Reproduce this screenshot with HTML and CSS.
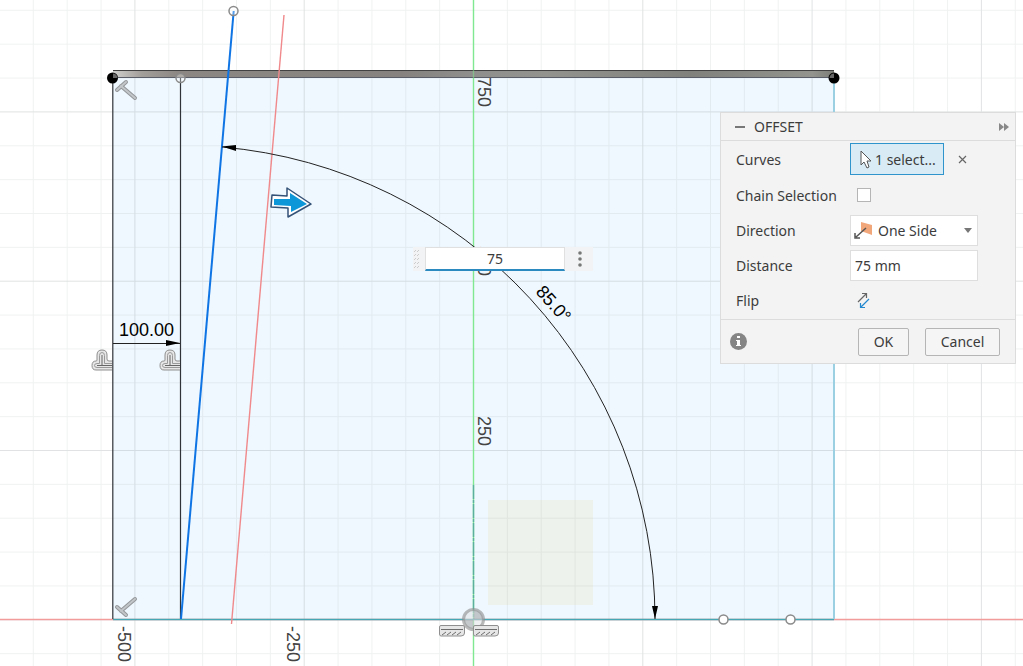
FILE: index.html
```html
<!DOCTYPE html>
<html lang="en">
<head>
    <meta charset="UTF-8">
    <meta name="viewport" content="width=device-width, initial-scale=1.0">
    <title>Offset</title>
    <link rel="stylesheet" href="styles.css">
</head>
<body>

<main class="workspace">
    <svg class="sketch" role="img" aria-label="Sketch canvas">
        <defs>
            <pattern id="minor" x="473" y="619.3" width="33.86" height="33.86" patternUnits="userSpaceOnUse">
                <path class="grid-minor" d="M0.5 0V33.86M0 0.5H33.86"/>
            </pattern>
            <pattern id="major" x="473" y="619.3" width="169.3" height="169.3" patternUnits="userSpaceOnUse">
                <path class="grid-major" d="M0.5 0V169.3M0 0.5H169.3"/>
            </pattern>
            <linearGradient id="bar" x1="0" x2="1" y1="0" y2="0">
                <stop offset="0" stop-color="#d0d0ce"/>
                <stop offset="0.04" stop-color="#a29e9a"/>
                <stop offset="0.09" stop-color="#8c8782"/>
                <stop offset="0.4" stop-color="#85827f"/>
                <stop offset="0.5" stop-color="#8f8f8d"/>
                <stop offset="0.6" stop-color="#92928f"/>
                <stop offset="0.8" stop-color="#80807d"/>
                <stop offset="0.97" stop-color="#92948d"/>
                <stop offset="1" stop-color="#7c7d78"/>
            </linearGradient>
            <g id="perpendicular">
                <path class="mark-edge" d="M0 0L14 12M-4 4L5 -4"/>
                <path class="mark-core" d="M0 0L14 12M-4 4L5 -4"/>
            </g>
            <g id="vertical">
                <path class="hv-shape" d="M10 10H-6Q-10 10 -10 5.5Q-10 1 -6 1Q-5 1 -5 0V-5Q-5 -10 0 -10Q5 -10 5 -5V-1Q5 1 7 1H10"/>
                <path class="hv-line" d="M10 7.5H-5Q-7.5 7.5 -7.5 5.5Q-7.5 3.5 -5 3.5H-2.5V-4.5Q-2.5 -7.5 0 -7.5Q2.5 -7.5 2.5 -4.5V3.5H10"/>
                <path class="hv-core" d="M0 -5V5M-5 5.5H10"/>
            </g>
            <g id="fixed">
                <path class="hv-shape" d="M2 0.5H24Q25.5 0.5 25.5 2V8Q25.5 11 22 11H2Q0.5 11 0.5 9V2Q0.5 0.5 2 0.5Z"/>
                <path class="fixed-line" d="M2 4.5H24M3 10L7 7M8 10L12 7M13 10L17 7M18 10L22 7"/>
            </g>
        </defs>

        <!-- closed profile and grid -->
        <rect class="profile" x="113" y="78" width="721" height="541"/>
        <rect class="plane" x="488" y="500" width="105" height="105"/>
        <rect width="100%" height="100%" fill="url(#minor)"/>
        <rect width="100%" height="100%" fill="url(#major)"/>

        <!-- axes -->
        <line class="axis-x" x1="0" y1="619.5" x2="100%" y2="619.5"/>
        <line class="axis-y" x1="473.5" y1="0" x2="473.5" y2="100%"/>
        <path class="construction" d="M473.5 485V619"/>
        <path class="base" d="M113 619.5H834"/>
        <path class="side" d="M834 78V619"/>

        <!-- solid body seen from the edge -->
        <rect x="113" y="70" width="721" height="8" fill="url(#bar)"/>
        <path class="body-top" d="M113 70.5H834"/>
        <path class="body-bottom" d="M113 77.5H834"/>
        <path class="axis-y faint" d="M473.5 70V78"/>

        <g class="scale">
            <text transform="translate(478 77) rotate(90)">750</text>
            <text transform="translate(478 246) rotate(90)">500</text>
            <text transform="translate(478 416) rotate(90)">250</text>
            <text transform="translate(118 626) rotate(90)">-500</text>
            <text transform="translate(287 626) rotate(90)">-250</text>
        </g>

        <!-- sketch lines -->
        <path class="line" d="M112.8 78V619M180.5 78V619"/>
        <path class="preview" d="M284 15L231.5 624"/>
        <path class="selected" d="M233.7 11L181 619"/>

        <!-- dimensions -->
        <path class="dimension" d="M113 343.5H180"/>
        <path class="arrowhead" d="M180 343L166 340V346Z"/>
        <text class="dimension-text" x="119" y="336">100.00</text>
        <path class="dimension" d="M222 147A474 474 0 0 1 655 619"/>
        <path class="arrowhead" d="M222 146.5L236 145V151ZM655 619L652 606H658Z"/>
        <text class="dimension-text" text-anchor="middle" transform="translate(549 308) rotate(48)">85.0°</text>

        <!-- points -->
        <circle class="origin" cx="473.5" cy="619.5" r="10"/>
        <path class="origin-fill" d="M473.5 619.5V610A9.5 9.5 0 0 1 483 619.5ZM473.5 619.5V629A9.5 9.5 0 0 1 464 619.5Z"/>
        <circle class="dot" cx="112.5" cy="78" r="5.5"/>
        <path class="dot-cut" d="M113 78V73.5A4.5 4.5 0 0 1 117.5 78Z"/>
        <circle class="dot" cx="834" cy="78" r="5.5"/>
        <path class="dot-cut" d="M834 78V73.5A4.5 4.5 0 0 0 829.5 78Z"/>
        <circle class="point clear" cx="180.5" cy="78" r="4.5"/>
        <circle class="point clear" cx="233.5" cy="11" r="4.5"/>
        <circle class="point" cx="723.5" cy="619.5" r="4.5"/>
        <circle class="point" cx="790.5" cy="619.5" r="4.5"/>

        <!-- constraints -->
        <use href="#perpendicular" transform="translate(121 86)"/>
        <use href="#perpendicular" transform="translate(121 611) scale(1 -1)"/>
        <use href="#vertical" transform="translate(102 360)"/>
        <use href="#vertical" transform="translate(170 360)"/>
        <use href="#fixed" transform="translate(439 625)"/>
        <use href="#fixed" transform="translate(473 625)"/>

        <!-- drag handle -->
        <path class="handle-edge" d="M272 195L287 196V188L311 204L288 217V208L271 207Z"/>
        <path class="handle" d="M274 199L290 199V193L307 204L291 212V206L274 205Z"/>
    </svg>

    <div class="value-box">
        <svg class="grip" width="12" height="24" aria-hidden="true">
            <path d="M1 5L3 3M1 9L3 7M1 13L3 11M1 17L3 15M1 21L3 19M4 5L6 3M4 9L6 7M4 13L6 11M4 17L6 15M4 21L6 19"/>
        </svg>
        <input type="text" value="75" aria-label="Offset distance">
        <button type="button" aria-label="More options">
            <svg width="6" height="18"><circle cx="4" cy="3" r="1.8"/><circle cx="4" cy="9" r="1.8"/><circle cx="4" cy="15" r="1.8"/></svg>
        </button>
    </div>

    <form class="panel">
        <header class="panel-header">
            <button type="button" class="plain collapse" aria-label="Collapse"></button>
            <h1>OFFSET</h1>
            <button type="button" class="plain expand" aria-label="Expand">
                <svg width="10" height="8"><path d="M0 0L5 4L0 8ZM5 0L10 4L5 8Z"/></svg>
            </button>
        </header>

        <div class="panel-body">
            <div class="row">
                <label for="curves">Curves</label>
                <button type="button" id="curves" class="selection">
                    <svg width="14" height="20" viewBox="0 0 14 20" aria-hidden="true">
                        <path d="M2 2V16L5 13L8 19L10 18L8 12H12Z"/>
                    </svg>
                    <span>1 select...</span>
                </button>
                <button type="button" class="plain clear-selection" aria-label="Clear selection">
                    <svg width="9" height="9"><path d="M1 1L8 8M8 1L1 8"/></svg>
                </button>
            </div>
            <div class="row">
                <label for="chain">Chain Selection</label>
                <input type="checkbox" id="chain">
            </div>
            <div class="row">
                <label for="direction">Direction</label>
                <div class="select-box">
                    <select id="direction">
                        <option>One Side</option>
                    </select>
                    <svg class="side-icon" width="20" height="18" aria-hidden="true">
                        <path class="face" d="M7 0L18 3V13L7 9Z"/>
                        <path class="arrow" d="M12 6L2 15M1 11V16H6"/>
                    </svg>
                    <svg class="caret" width="8" height="5" aria-hidden="true"><path d="M0 0H8L4 5Z"/></svg>
                </div>
            </div>
            <div class="row">
                <label for="distance">Distance</label>
                <input type="text" id="distance" value="75 mm">
            </div>
            <div class="row">
                <label for="flip">Flip</label>
                <button type="button" id="flip" class="plain flip" aria-label="Flip">
                    <svg width="14" height="17">
                        <path class="up" d="M1 10L9 2M5 1.5H9.5V6"/>
                        <path class="down" d="M12 7L4 15M3.5 11V15.5H8"/>
                    </svg>
                </button>
            </div>
        </div>

        <footer class="panel-footer">
            <button type="button" class="plain info" aria-label="Info">
                <svg width="17" height="17"><circle cx="8.5" cy="8.5" r="8.5"/><path d="M7 3H10V5H7ZM6 7H10V12H11V13H6V12H7V8H6Z"/></svg>
            </button>
            <button type="submit" class="ok">OK</button>
            <button type="button" class="cancel">Cancel</button>
        </footer>
    </form>
</main>

</body>
</html>
```
FILE: styles.css
```css
* {
    box-sizing: border-box;
}

body {
    margin: 0;
    background: #fff;
    color: #3c3c3c;
    font-family: "Noto Sans", sans-serif;
    font-size: 14px;
}

input, select, button {
    margin: 0;
    font: inherit;
    color: inherit;
}

button {
    cursor: pointer;
}

svg {
    display: block;
    fill: none;
}

.workspace {
    position: relative;
    height: 100vh;
    overflow: hidden;
}

/* sketch */
.sketch {
    width: 100%;
    height: 100%;
}

.profile { fill: #eff8fe; }
.plane { fill: #eef2ec; }
.grid-minor { stroke: rgba(90, 100, 105, 0.09); }
.grid-major { stroke: rgba(90, 100, 105, 0.1); }
.axis-x { stroke: #f39c9c; stroke-width: 1.4; }
.axis-y { stroke: #7fe890; stroke-width: 1.4; }
.faint { opacity: 0.5; }
.construction { stroke: #5cae9f; stroke-width: 1.4; stroke-dasharray: 14 1 3 1; }
.base { stroke: #45a6b4; stroke-width: 1.4; }
.side { stroke: #9bd0e2; stroke-width: 2; }
.body-top { stroke: #424242; }
.body-bottom { stroke: #595e68; }
.line { stroke: #303438; stroke-width: 1.2; }
.preview { stroke: #f0898b; stroke-width: 1.4; }
.selected { stroke: #0f74e4; stroke-width: 2; }
.dimension { stroke: #222; }
.arrowhead { fill: #000; }

.scale, .dimension-text {
    font-family: "Liberation Sans", sans-serif;
    font-size: 18px;
}

.scale { fill: #444; }
.dimension-text { fill: #000; }

.dot { fill: #000; }
.dot-cut { fill: #666; }
.point { fill: #fff; stroke: #8a8a8a; stroke-width: 1.5; }
.clear { fill: rgba(255, 255, 255, 0.3); }
.origin { fill: rgba(225, 228, 230, 0.6); stroke: rgba(140, 140, 140, 0.6); stroke-width: 3; }
.origin-fill { fill: rgba(140, 145, 148, 0.4); }

.mark-edge { stroke: #929699; stroke-width: 4; stroke-linecap: round; }
.mark-core { stroke: #c3c6c8; stroke-width: 2; stroke-linecap: round; }
.hv-shape { fill: #e6e6e6; stroke: #8f8f8f; }
.hv-line { stroke: #9a9a9a; }
.hv-core { stroke: #666; }
.fixed-line { stroke: #6d6d6d; }

.handle-edge { fill: #fff; stroke: #345277; stroke-width: 1.5; stroke-linejoin: round; }
.handle { fill: #0d96d8; }

/* value box on the canvas */
.value-box {
    position: absolute;
    top: 247px;
    left: 413px;
    display: flex;
    width: 180px;
    height: 24px;
    background: #f1f3f4;
}

.grip {
    stroke: #ccc;
}

.value-box input {
    flex: 1;
    min-width: 0;
    padding: 0;
    border: 1px solid #e0e0e0;
    border-bottom: 2px solid #2b8ac0;
    background: #fff;
    text-align: center;
    outline: none;
}

.value-box button {
    display: flex;
    align-items: center;
    justify-content: center;
    width: 28px;
    padding: 0;
    border: 0;
    background: none;
}

.value-box circle {
    fill: #777;
}

/* offset panel */
.panel {
    position: absolute;
    top: 112px;
    right: 7px;
    width: 296px;
    border: 1px solid #dcdcdc;
    background: #f3f3f3;
}

.plain {
    display: flex;
    padding: 0;
    border: 0;
    background: none;
}

.panel-header {
    display: flex;
    align-items: center;
    gap: 9px;
    height: 28px;
    padding: 0 6px 0 14px;
    border-bottom: 1px solid #dcdcdc;
}

.panel-header h1 {
    margin: 0;
    font-size: 14px;
    font-weight: 400;
}

.collapse {
    width: 10px;
    height: 2px;
    background: #777;
}

.expand {
    margin-left: auto;
}

.expand path {
    fill: #888;
}

.panel-body {
    padding-bottom: 1px;
}

.row {
    display: grid;
    grid-template-columns: 114px 128px;
    align-items: center;
    height: 36px;
    padding-left: 15px;
}

.row:first-child {
    grid-template-columns: 114px 94px auto;
    justify-content: start;
}

/* the lower rows sit a little closer together */
.row:nth-child(n + 3) {
    height: 35px;
}

.selection {
    display: flex;
    align-items: center;
    gap: 2px;
    height: 32px;
    padding: 0 0 0 8px;
    border: 1px solid #2f93cc;
    background: #d9ebf5;
    white-space: nowrap;
}

.selection path {
    fill: #fff;
    stroke: #555;
}

.clear-selection {
    margin-left: 14px;
}

.clear-selection path {
    stroke: #666;
    stroke-width: 1.2;
}

.row input[type="checkbox"] {
    appearance: none;
    width: 14px;
    height: 14px;
    margin-left: 7px;
    border: 1px solid #b5b5b5;
    background: #fff;
}

.select-box {
    position: relative;
}

.select-box select,
.row input[type="text"] {
    appearance: none;
    width: 100%;
    height: 31px;
    padding: 0 4px;
    border: 1px solid #dedede;
    border-radius: 0;
    background: #fff;
}

.select-box select {
    padding-left: 27px;
}

.side-icon, .caret {
    position: absolute;
    pointer-events: none;
}

.side-icon {
    top: 7px;
    left: 4px;
}

.face { fill: #f2a77b; }
.arrow { stroke: #555; stroke-width: 1.5; }

.caret {
    top: 13px;
    right: 6px;
    fill: #777;
}

.flip {
    margin-left: 7px;
    width: 14px;
}

.up { stroke: #666; stroke-width: 1.2; }
.down { stroke: #2488cf; stroke-width: 1.2; }

.panel-footer {
    display: flex;
    align-items: center;
    gap: 16px;
    height: 44px;
    padding: 0 15px 0 9px;
    border-top: 1px solid #dcdcdc;
}

.info {
    margin-right: auto;
}

.info circle { fill: #858585; }
.info path { fill: #fff; }

.ok, .cancel {
    height: 28px;
    padding: 0;
    border: 1px solid #b5b5b5;
    border-radius: 2px;
    background: #f5f5f5;
}

.ok { width: 51px; }
.cancel { width: 75px; }
```
